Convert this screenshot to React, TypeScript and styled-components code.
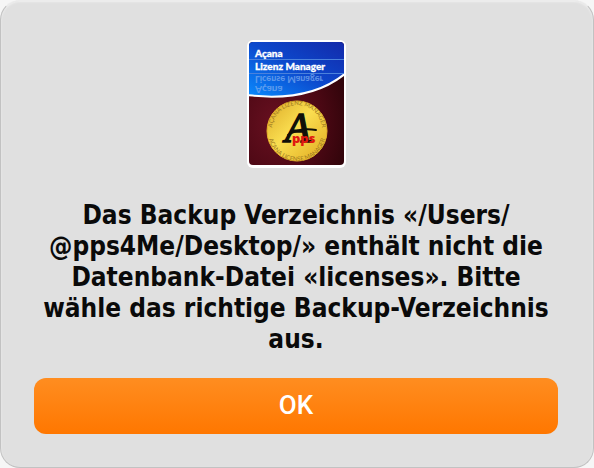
import React from "react";
import styled, { createGlobalStyle } from "styled-components";

const GlobalStyle = createGlobalStyle`
  * { box-sizing: border-box; }
  body { margin: 0; background: #f6f6f6; }
`;

const Dialog = styled.section`
  display: flex;
  flex-direction: column;
  align-items: center;
  min-height: 100vh;
  padding: 39px 35px 33px 33px;
  background: #e0e0e0;
  border: 1px solid #c2c2c2;
  border-top-color: #ececec;
  border-radius: 20px;
  box-shadow: inset 0 1px 2px #f0f0f0;
`;

const Logo = styled.svg`
  display: block;
  flex: none;
  width: 100px;
  height: 128px;
`;

const Message = styled.p`
  margin: 32px 0 23px;
  font: bold 26px/31px "DejaVu Sans Condensed", "DejaVu Sans", sans-serif;
  color: #0a0a0a;
  text-align: center;
  white-space: nowrap;
`;

const ConfirmButton = styled.button`
  width: 100%;
  height: 56px;
  padding: 0 0 2px;
  border: 0;
  border-radius: 12px;
  background: linear-gradient(#ff8d20, #ff7700);
  color: #fff;
  font: 500 26px/30px Roboto, "Liberation Sans", sans-serif;
  cursor: pointer;
`;

function AppLogo() {
  return (
    <Logo viewBox="0 0 100 128" role="img" aria-label="Açana Lizenz Manager">
      <defs>
        <linearGradient id="sky" x1="1" y1="0" x2="0" y2="1">
          <stop offset="0" stopColor="#1428a8" />
          <stop offset="0.5" stopColor="#0c48cc" />
          <stop offset="1" stopColor="#0a8cff" />
        </linearGradient>
        <radialGradient id="wine" cx="0.3" cy="0.65" r="0.75">
          <stop offset="0" stopColor="#681020" />
          <stop offset="0.6" stopColor="#4c0814" />
          <stop offset="1" stopColor="#30040a" />
        </radialGradient>
        <linearGradient id="gold" x1="0" y1="0" x2="1" y2="1">
          <stop offset="0" stopColor="#dcaa28" />
          <stop offset="0.45" stopColor="#fade50" />
          <stop offset="1" stopColor="#e0aa20" />
        </linearGradient>
        <clipPath id="card"><rect x="3" y="2" width="95" height="123" rx="4" /></clipPath>
        <path id="rimTop" d="M25 90a25 25 0 0 1 50 0" />
        <path id="rimBottom" d="M21 92a29 29 0 0 0 58 0" />
      </defs>
      <rect x="1" width="99" height="128" rx="6" fill="#fff" />
      <g clipPath="url(#card)">
        <rect width="100" height="128" fill="url(#wine)" />
        <path d="M0 0H100V33Q64 63 0 55Z" fill="url(#sky)" />
        <path d="M0 55Q64 63 100 33" fill="none" stroke="#fff" strokeWidth="2" />
        <path d="M0 19.500H100M0 33.500H100" stroke="#4b82dc" strokeWidth="1" />
      </g>
      <g fontFamily="Lato, sans-serif" fontWeight="900" fontSize="10">
        <text x="9" y="17" fill="#fff" stroke="#fff" strokeWidth="0.3">Açana</text>
        <text x="9" y="30" fill="#fff" stroke="#fff" strokeWidth="0.3">Lizenz Manager</text>
        <g transform="scale(1 -1)" fill="#7cacf0" opacity="0.7">
          <text x="9" y="-36" fontSize="9">License Manager</text>
          <text x="9" y="-46">Açana</text>
        </g>
      </g>
      <circle cx="51" cy="91" r="30" fill="url(#gold)" stroke="#e8b42c" />
      <g fontFamily="Lato, sans-serif" fontSize="6" fill="#9c7820" transform="translate(1 0)">
        <text textAnchor="middle"><textPath href="#rimTop" startOffset="50%">AÇANA LIZENZ MANAGER</textPath></text>
        <text textAnchor="middle"><textPath href="#rimBottom" startOffset="50%">AÇANA LICENSE MANAGER</textPath></text>
      </g>
      <text x="39" y="102" fontFamily="Liberation Serif, serif" fontStyle="italic" fontSize="42" fill="#101008" stroke="#101008" strokeWidth="1.500">A</text>
      <path d="M42 95Q54 87 70 90" fill="none" stroke="#101008" strokeWidth="2" strokeLinecap="round" />
      <text x="46" y="103" fontFamily="Open Sans, sans-serif" fontWeight="800" fontSize="13" fill="#e01810">pps</text>
    </Logo>
  );
}

export default function App() {
  return (
    <>
      <GlobalStyle />
      <Dialog role="alertdialog" aria-describedby="message">
        <AppLogo />
        <Message id="message">
          Das Backup Verzeichnis «/Users/<br />
          @pps4Me/Desktop/» enthält nicht die<br />
          Datenbank-Datei «licenses». Bitte<br />
          wähle das richtige Backup-Verzeichnis<br />
          aus.
        </Message>
        <ConfirmButton type="button">OK</ConfirmButton>
      </Dialog>
    </>
  );
}
